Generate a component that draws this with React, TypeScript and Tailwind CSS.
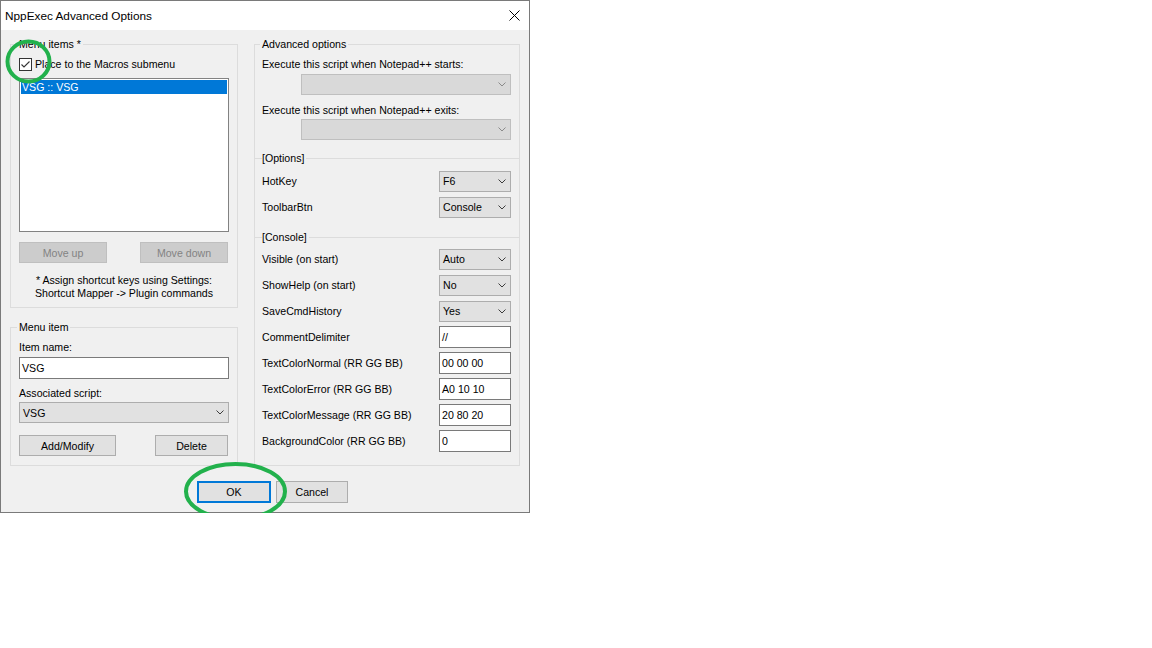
import React from 'react';

function Chevron({ color = '#3c3c3c' }: { color?: string }) {
  return (
    <svg width="8" height="5" viewBox="0 0 8 5" className="shrink-0">
      <path d="M0.5 0.5 L4 4 L7.5 0.5" fill="none" stroke={color} strokeWidth="1" />
    </svg>
  );
}

function Combo({ value = '', disabled = false, className = '' }: { value?: string; disabled?: boolean; className?: string }) {
  return (
    <div
      className={`flex items-center justify-between h-[21px] border pl-[3px] pr-[4px] ${
        disabled ? 'bg-[#d9d9d9] border-[#bfbfbf]' : 'bg-[#e1e1e1] border-[#adadad]'
      } ${className}`}
    >
      <span>{value}</span>
      <Chevron color={disabled ? '#8a8a8a' : '#3c3c3c'} />
    </div>
  );
}

function Edit({ value, className = '' }: { value: string; className?: string }) {
  return (
    <div className={`flex items-center h-[22px] border border-[#7a7a7a] bg-white pl-[2px] ${className}`}>{value}</div>
  );
}

function Button({ label, disabled = false, className = '' }: { label: string; disabled?: boolean; className?: string }) {
  return (
    <div
      className={`flex items-center justify-center h-[21px] border ${
        disabled ? 'bg-[#cccccc] border-[#bfbfbf] text-[#838383]' : 'bg-[#e1e1e1] border-[#adadad]'
      } ${className}`}
    >
      {label}
    </div>
  );
}

function Section({ label }: { label: string }) {
  return (
    <div className="flex items-center h-[14px] -ml-[7px] -mr-[8px]">
      <div className="w-[7px] h-px bg-[#dcdcdc]" />
      <span>{label}</span>
      <div className="flex-1 h-px bg-[#dcdcdc] ml-[2px]" />
    </div>
  );
}

function Row({ label, children }: { label: string; children: React.ReactNode }) {
  return (
    <div className="flex items-center justify-between h-[22px]">
      <span>{label}</span>
      {children}
    </div>
  );
}

export default function App() {
  return (
    <div className="relative w-[530px] h-[513px] flex flex-col border border-[#7a7a7a] bg-white text-black text-[10.6px] leading-[14px] font-['Liberation_Sans',Arial,sans-serif]">
      {/* title bar */}
      <div className="flex items-center justify-between h-[29px] bg-white pl-[4px] pr-[9px]">
        <span className="text-[11.8px]">NppExec Advanced Options</span>
        <svg width="11" height="11" viewBox="0 0 11 11">
          <path d="M0.5 0.5 L10.5 10.5 M10.5 0.5 L0.5 10.5" stroke="#000" strokeWidth="1" />
        </svg>
      </div>

      <div className="flex-1 bg-[#f0f0f0] pt-[7px] pl-[9px]">
        <div className="flex gap-[16px]">
          {/* left column */}
          <div className="w-[228px] flex flex-col">
            <fieldset className="h-[271px] border border-[#dcdcdc] px-[8px]">
              <legend className="px-[2px] -ml-[2px]">Menu items *</legend>
              <div className="flex flex-col">
                <div className="flex items-center h-[14px] mt-[6px]">
                  <div className="w-[13px] h-[13px] border border-[#333333] bg-white flex items-center justify-center">
                    <svg width="11" height="11" viewBox="0 0 11 11">
                      <path d="M1.5 5.5 L4 8 L9.5 2.5" fill="none" stroke="#333" strokeWidth="1.1" />
                    </svg>
                  </div>
                  <span className="ml-[3px]">Place to the Macros submenu</span>
                </div>
                <div className="mt-[7px] h-[154px] border border-[#828282] bg-white p-px">
                  <div className="h-[14px] bg-[#0078d7] text-white pl-px">VSG :: VSG</div>
                </div>
                <div className="flex mt-[10px]">
                  <Button label="Move up" disabled className="w-[88px]" />
                  <Button label="Move down" disabled className="w-[88px] ml-[33px]" />
                </div>
                <div className="mt-[11px] text-center leading-[13px]">
                  <div>* Assign shortcut keys using Settings:</div>
                  <div>Shortcut Mapper -&gt; Plugin commands</div>
                </div>
              </div>
            </fieldset>

            <fieldset className="mt-[12px] h-[146px] border border-[#dcdcdc] px-[8px]">
              <legend className="px-[2px] -ml-[2px]">Menu item</legend>
              <div className="flex flex-col">
                <div className="mt-[6px]">Item name:</div>
                <Edit value="VSG" className="mt-[3px]" />
                <div className="mt-[7px]">Associated script:</div>
                <Combo value="VSG" className="mt-[2px]" />
                <div className="flex mt-[12px]">
                  <Button label="Add/Modify" className="w-[97px]" />
                  <Button label="Delete" className="w-[73px] ml-[39px]" />
                </div>
              </div>
            </fieldset>
          </div>

          {/* right column */}
          <fieldset className="w-[266px] h-[429px] border border-[#dcdcdc] pl-[7px] pr-[8px]">
            <legend className="px-[2px] -ml-[2px]">Advanced options</legend>
            <div className="flex flex-col">
              <div className="mt-[6px]">Execute this script when Notepad++ starts:</div>
              <Combo disabled className="mt-[3px] ml-[39px]" />
              <div className="mt-[8px]">Execute this script when Notepad++ exits:</div>
              <Combo disabled className="mt-[2px] ml-[39px]" />

              <div className="mt-[11px]">
                <Section label="[Options]" />
              </div>
              <div className="flex flex-col gap-[4px] mt-[5px]">
                <Row label="HotKey">
                  <Combo value="F6" className="w-[72px]" />
                </Row>
                <Row label="ToolbarBtn">
                  <Combo value="Console" className="w-[72px]" />
                </Row>
              </div>

              <div className="mt-[12px]">
                <Section label="[Console]" />
              </div>
              <div className="flex flex-col gap-[4px] mt-[4px]">
                <Row label="Visible (on start)">
                  <Combo value="Auto" className="w-[72px]" />
                </Row>
                <Row label="ShowHelp (on start)">
                  <Combo value="No" className="w-[72px]" />
                </Row>
                <Row label="SaveCmdHistory">
                  <Combo value="Yes" className="w-[72px]" />
                </Row>
                <Row label="CommentDelimiter">
                  <Edit value="//" className="w-[72px]" />
                </Row>
                <Row label="TextColorNormal (RR GG BB)">
                  <Edit value="00 00 00" className="w-[72px]" />
                </Row>
                <Row label="TextColorError (RR GG BB)">
                  <Edit value="A0 10 10" className="w-[72px]" />
                </Row>
                <Row label="TextColorMessage (RR GG BB)">
                  <Edit value="20 80 20" className="w-[72px]" />
                </Row>
                <Row label="BackgroundColor (RR GG BB)">
                  <Edit value="0" className="w-[72px]" />
                </Row>
              </div>
            </div>
          </fieldset>
        </div>

        <div className="flex gap-[5px] mt-[15px] ml-[187px]">
          <div className="flex items-center justify-center w-[74px] h-[22px] border-2 border-[#0078d7] bg-[#e1e1e1]">OK</div>
          <Button label="Cancel" className="w-[72px] h-[22px]" />
        </div>
      </div>

      {/* green annotation marks */}
      <svg className="absolute left-0 top-0 pointer-events-none overflow-visible" width="530" height="530">
        <ellipse cx="27.5" cy="60.5" rx="21" ry="20" fill="none" stroke="#22b14c" strokeWidth="4" />
        <ellipse cx="234.5" cy="490.5" rx="49.5" ry="27.5" fill="none" stroke="#22b14c" strokeWidth="4" />
      </svg>
    </div>
  );
}
